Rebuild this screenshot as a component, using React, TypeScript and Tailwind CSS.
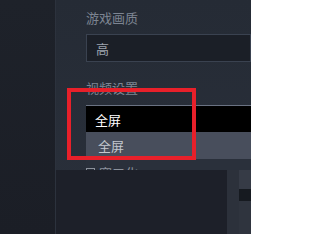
export default function App() {
  return (
    <div className="relative flex h-[234px] w-[251px] overflow-hidden bg-[#1c2028] font-['Noto_Sans_CJK_SC',sans-serif] text-[13px] leading-none">
      <div className="w-[56px] shrink-0 bg-gradient-to-b from-[#1e222a] to-[#1b1e26] border-r border-[#2c323d]" />
      <div className="flex-1 bg-gradient-to-b from-[#252b35] to-[#2a303b] pl-[30px] pt-[11px]">
        <div className="h-[13px] text-[#7d8592]">游戏画质</div>
        <div className="mt-[10px] flex h-[28px] items-center border border-[#3a4250] bg-[#1b1f27] pl-[9px] text-[#9ea4ad]">高</div>
        <div className="mt-[19px] h-[13px] text-[#7d8592]">视频设置</div>
        <div className="mt-[11px] border-t border-[#6a7282] bg-black">
          <div className="flex h-[26px] items-center pl-[9px] text-white">全屏</div>
        </div>
        <div className="flex h-[27px] items-center bg-[#484e5c] pl-[12px] text-[#c4c8cf]">全屏</div>
        <div className="h-[12px] bg-[#2a303b]" />
        <div className="mt-[-5px] flex items-center gap-[4px] text-[#8b919b]">
          <span className="inline-block h-[9px] w-[9px] border border-[#8b919b]" />
          <span>窗口化</span>
        </div>
      </div>
      <div className="absolute left-[67px] top-[88px] h-[72px] w-[129px] border-4 border-[#e8202a]" />
      <div className="absolute left-[56px] top-[170px] flex h-[64px] w-[195px]">
        <div className="w-[171px] bg-[#1d2029]" />
        <div className="w-[12px] bg-[#2c313b]" />
        <div className="flex flex-1 flex-col">
          <div className="h-[19px] bg-[#363b46]" />
          <div className="h-[12px] bg-[#161a20]" />
          <div className="flex-1 bg-[#2f343e]" />
        </div>
      </div>
    </div>
  );
}
